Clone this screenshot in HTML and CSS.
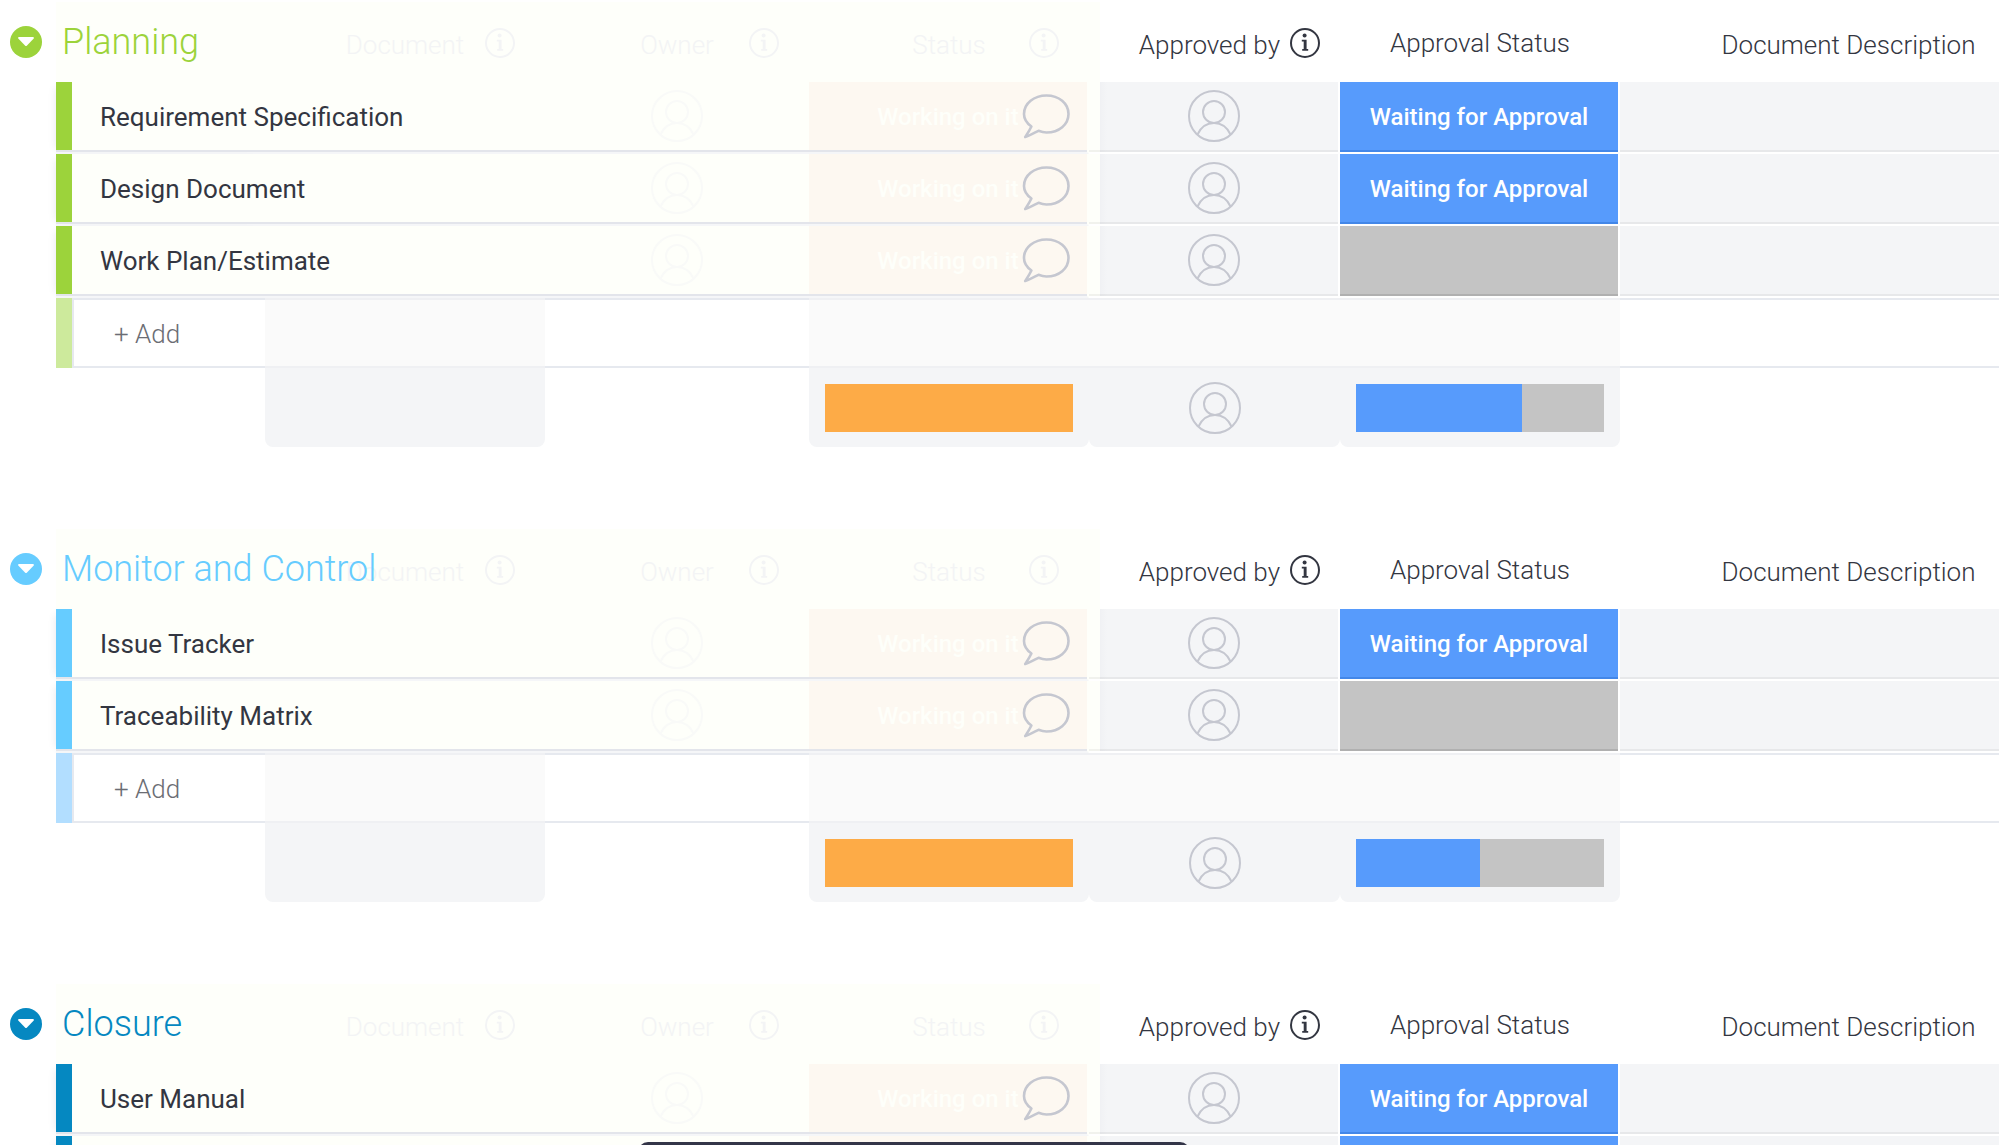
FILE: index.html
```html
<!DOCTYPE html>
<html lang="en">
<head>
    <meta charset="UTF-8">
    <meta name="viewport" content="width=device-width, initial-scale=1.0">
    <title>Project Documents</title>
    <link rel="stylesheet" href="styles.css">
</head>
<body>
    <svg class="sprite" aria-hidden="true">
        <symbol id="info" viewBox="0 0 30 30">
            <circle cx="15" cy="15" r="14" fill="none" stroke="currentColor" stroke-width="2"/>
            <circle cx="14.6" cy="7.6" r="2" fill="currentColor"/>
            <path d="M11.800 11.800h4.800v9.200h1.600v1.700h-6v-1.700h1.500v-7.500H11.800z" fill="currentColor"/>
        </symbol>
        <symbol id="person" viewBox="0 0 52 52">
            <g fill="none" stroke="currentColor" stroke-width="2">
                <circle cx="26" cy="26" r="25"/>
                <circle cx="26" cy="22" r="11"/>
                <path d="M9.500 44.500C13 37 19 33 26 33S39 37 42.500 44.500"/>
            </g>
        </symbol>
        <symbol id="bubble" viewBox="0 0 48 48">
            <path d="M9.400 34.500C4.500 31 2 27 2 22C2 11.500 12 3.500 24.500 3.500S46.500 11.500 46.500 22S37 40.500 24.500 40.500C22 40.500 19.500 40 16.500 38.800C12 41 8 43.500 3.200 45C5.500 41.500 7.500 38.500 9.400 34.500Z" fill="none" stroke="currentColor" stroke-width="2.600" stroke-linejoin="round"/>
        </symbol>
        <symbol id="arrow" viewBox="0 0 16 10">
            <path d="M1 0h14q1.500 .5 .5 1.800L9 8.500q-1 1-2 0L.5 1.800Q-.5 .5 1 0z" fill="currentColor"/>
        </symbol>
    </svg>

    <main>
        <table class="group planning">
            <colgroup>
                <col class="col_gutter"><col class="col_name"><col class="col_doc"><col class="col_owner">
                <col class="col_status"><col class="col_by"><col class="col_status"><col class="col_desc">
            </colgroup>
            <thead>
                <tr>
                    <td><button class="toggle" type="button" aria-label="Collapse Planning"><svg><use href="#arrow"/></svg></button></td>
                    <th class="float title"><h2>Planning</h2></th>
                    <th class="float"><div class="head"><span>Document</span><svg class="info"><use href="#info"/></svg></div></th>
                    <th class="float"><div class="head"><span>Owner</span><svg class="info"><use href="#info"/></svg></div></th>
                    <th class="float"><div class="head"><span>Status</span><svg class="info"><use href="#info"/></svg></div></th>
                    <th class="by"><div class="head_by"><span>Approved by</span><svg class="info"><use href="#info"/></svg></div></th>
                    <th class="approval_head">Approval Status</th>
                    <th>Document Description</th>
                </tr>
            </thead>
            <tbody>
                <tr class="row">
                    <td></td>
                    <th class="float name" scope="row"><div class="item"><span class="bar"></span><span>Requirement Specification</span></div></th>
                    <td class="float"></td>
                    <td class="float"><svg class="person"><use href="#person"/></svg></td>
                    <td class="float working">Working on it<button class="chat" type="button" aria-label="Open updates"><svg><use href="#bubble"/></svg></button></td>
                    <td class="cell by"><svg class="person"><use href="#person"/></svg></td>
                    <td class="cell waiting">Waiting for Approval</td>
                    <td class="cell"></td>
                </tr>
                <tr class="row">
                    <td></td>
                    <th class="float name" scope="row"><div class="item"><span class="bar"></span><span>Design Document</span></div></th>
                    <td class="float"></td>
                    <td class="float"><svg class="person"><use href="#person"/></svg></td>
                    <td class="float working">Working on it<button class="chat" type="button" aria-label="Open updates"><svg><use href="#bubble"/></svg></button></td>
                    <td class="cell by"><svg class="person"><use href="#person"/></svg></td>
                    <td class="cell waiting">Waiting for Approval</td>
                    <td class="cell"></td>
                </tr>
                <tr class="row">
                    <td></td>
                    <th class="float name" scope="row"><div class="item"><span class="bar"></span><span>Work Plan/Estimate</span></div></th>
                    <td class="float"></td>
                    <td class="float"><svg class="person"><use href="#person"/></svg></td>
                    <td class="float working">Working on it<button class="chat" type="button" aria-label="Open updates"><svg><use href="#bubble"/></svg></button></td>
                    <td class="cell by"><svg class="person"><use href="#person"/></svg></td>
                    <td class="cell empty"></td>
                    <td class="cell"></td>
                </tr>
            </tbody>
            <tfoot>
                <tr class="add">
                    <td></td>
                    <td><div class="item"><span class="bar"></span><input class="add_input" type="text" placeholder="+ Add" aria-label="Add to Planning"></div></td>
                    <td class="tint"></td>
                    <td></td>
                    <td class="tint"></td>
                    <td class="tint"></td>
                    <td class="tint"></td>
                    <td></td>
                </tr>
                <tr class="summary">
                    <td></td>
                    <td></td>
                    <td><div class="box"></div></td>
                    <td></td>
                    <td><div class="box"><div class="battery"><span class="orange" style="width: 100%"></span></div></div></td>
                    <td><div class="box"><svg class="person"><use href="#person"/></svg></div></td>
                    <td><div class="box"><div class="battery"><span class="blue" style="width: 67%"></span><span class="grey" style="width: 33%"></span></div></div></td>
                    <td></td>
                </tr>
            </tfoot>
        </table>

        <table class="group monitor">
            <colgroup>
                <col class="col_gutter"><col class="col_name"><col class="col_doc"><col class="col_owner">
                <col class="col_status"><col class="col_by"><col class="col_status"><col class="col_desc">
            </colgroup>
            <thead>
                <tr>
                    <td><button class="toggle" type="button" aria-label="Collapse Monitor and Control"><svg><use href="#arrow"/></svg></button></td>
                    <th class="float title"><h2>Monitor and Control</h2></th>
                    <th class="float"><div class="head"><span>Document</span><svg class="info"><use href="#info"/></svg></div></th>
                    <th class="float"><div class="head"><span>Owner</span><svg class="info"><use href="#info"/></svg></div></th>
                    <th class="float"><div class="head"><span>Status</span><svg class="info"><use href="#info"/></svg></div></th>
                    <th class="by"><div class="head_by"><span>Approved by</span><svg class="info"><use href="#info"/></svg></div></th>
                    <th class="approval_head">Approval Status</th>
                    <th>Document Description</th>
                </tr>
            </thead>
            <tbody>
                <tr class="row">
                    <td></td>
                    <th class="float name" scope="row"><div class="item"><span class="bar"></span><span>Issue Tracker</span></div></th>
                    <td class="float"></td>
                    <td class="float"><svg class="person"><use href="#person"/></svg></td>
                    <td class="float working">Working on it<button class="chat" type="button" aria-label="Open updates"><svg><use href="#bubble"/></svg></button></td>
                    <td class="cell by"><svg class="person"><use href="#person"/></svg></td>
                    <td class="cell waiting">Waiting for Approval</td>
                    <td class="cell"></td>
                </tr>
                <tr class="row">
                    <td></td>
                    <th class="float name" scope="row"><div class="item"><span class="bar"></span><span>Traceability Matrix</span></div></th>
                    <td class="float"></td>
                    <td class="float"><svg class="person"><use href="#person"/></svg></td>
                    <td class="float working">Working on it<button class="chat" type="button" aria-label="Open updates"><svg><use href="#bubble"/></svg></button></td>
                    <td class="cell by"><svg class="person"><use href="#person"/></svg></td>
                    <td class="cell empty"></td>
                    <td class="cell"></td>
                </tr>
            </tbody>
            <tfoot>
                <tr class="add">
                    <td></td>
                    <td><div class="item"><span class="bar"></span><input class="add_input" type="text" placeholder="+ Add" aria-label="Add to Monitor and Control"></div></td>
                    <td class="tint"></td>
                    <td></td>
                    <td class="tint"></td>
                    <td class="tint"></td>
                    <td class="tint"></td>
                    <td></td>
                </tr>
                <tr class="summary">
                    <td></td>
                    <td></td>
                    <td><div class="box"></div></td>
                    <td></td>
                    <td><div class="box"><div class="battery"><span class="orange" style="width: 100%"></span></div></div></td>
                    <td><div class="box"><svg class="person"><use href="#person"/></svg></div></td>
                    <td><div class="box"><div class="battery"><span class="blue" style="width: 50%"></span><span class="grey" style="width: 50%"></span></div></div></td>
                    <td></td>
                </tr>
            </tfoot>
        </table>

        <table class="group closure">
            <colgroup>
                <col class="col_gutter"><col class="col_name"><col class="col_doc"><col class="col_owner">
                <col class="col_status"><col class="col_by"><col class="col_status"><col class="col_desc">
            </colgroup>
            <thead>
                <tr>
                    <td><button class="toggle" type="button" aria-label="Collapse Closure"><svg><use href="#arrow"/></svg></button></td>
                    <th class="float title"><h2>Closure</h2></th>
                    <th class="float"><div class="head"><span>Document</span><svg class="info"><use href="#info"/></svg></div></th>
                    <th class="float"><div class="head"><span>Owner</span><svg class="info"><use href="#info"/></svg></div></th>
                    <th class="float"><div class="head"><span>Status</span><svg class="info"><use href="#info"/></svg></div></th>
                    <th class="by"><div class="head_by"><span>Approved by</span><svg class="info"><use href="#info"/></svg></div></th>
                    <th class="approval_head">Approval Status</th>
                    <th>Document Description</th>
                </tr>
            </thead>
            <tbody>
                <tr class="row">
                    <td></td>
                    <th class="float name" scope="row"><div class="item"><span class="bar"></span><span>User Manual</span></div></th>
                    <td class="float"></td>
                    <td class="float"><svg class="person"><use href="#person"/></svg></td>
                    <td class="float working">Working on it<button class="chat" type="button" aria-label="Open updates"><svg><use href="#bubble"/></svg></button></td>
                    <td class="cell by"><svg class="person"><use href="#person"/></svg></td>
                    <td class="cell waiting">Waiting for Approval</td>
                    <td class="cell"></td>
                </tr>
                <tr class="row">
                    <td></td>
                    <th class="float name" scope="row"><div class="item"><span class="bar"></span></div></th>
                    <td class="float"></td>
                    <td class="float"></td>
                    <td class="float working"></td>
                    <td class="cell by"></td>
                    <td class="cell waiting"></td>
                    <td class="cell"></td>
                </tr>
            </tbody>
        </table>
    </main>
    <div class="toolbar"></div>
</body>
</html>
```

FILE: styles.css
```css
* {
    box-sizing: border-box;
}
body {
    margin: 0;
    padding-top: 2px;
    height: 100vh;
    overflow: hidden;
    background-color: #fff;
    color: #333641;
    font-family: Roboto, sans-serif;
    font-size: 26px;
    font-weight: 300;
}
.sprite {
    position: absolute;
    width: 0;
    height: 0;
}
.planning {
    --color: #9cd33b;
    --light: #cdea9c;
}
.monitor {
    --color: #66ccff;
    --light: #b2deff;
}
.closure {
    --color: #0588c1;
    --light: #82c3e0;
}

/* group table */
.group {
    width: 100%;
    min-width: 2077px;
    margin-bottom: 82px;
    table-layout: fixed;
    border-collapse: separate;
    border-spacing: 0;
}
.col_gutter {
    width: 56px;
}
.col_name {
    width: 209px;
}
.col_doc {
    width: 280px;
}
.col_owner {
    width: 264px;
}
.col_status {
    width: 280px;
}
.col_by {
    width: 251px;
}
td, th {
    padding: 0;
    font-weight: inherit;
    text-align: center;
    white-space: nowrap;
}
svg {
    display: block;
}

/* header */
thead tr {
    height: 80px;
}
thead .float {
    background-color: #fefffa;
    color: #f3f4f5;
}
thead .by {
    background: linear-gradient(to right, #fefffa 11px, #fff 11px);
}
thead .title {
    position: relative;
    z-index: 1;
    padding-left: 6px;
    text-align: left;
}
thead th {
    padding-top: 6px;
}
thead .approval_head {
    padding-top: 2px;
}
h2 {
    margin: 0;
    color: var(--color);
    font-size: 36px;
    font-weight: 300;
    line-height: 40px;
    padding-bottom: 6px;
}
.toggle {
    display: flex;
    align-items: center;
    justify-content: center;
    width: 32px;
    height: 32px;
    margin-left: 10px;
    padding: 0;
    border: none;
    border-radius: 50%;
    background-color: var(--color);
    color: #fff;
}
.toggle svg {
    width: 16px;
    height: 10px;
}
.info {
    width: 30px;
    height: 30px;
    margin-bottom: 4px;
}
.head {
    display: grid;
    grid-template-columns: 30px 1fr 30px;
    align-items: center;
    padding: 0 30px;
}
.head span {
    grid-column: 2;
}
.head_by {
    display: flex;
    align-items: center;
    justify-content: flex-end;
    gap: 10px;
    padding-right: 20px;
}

/* rows */
.row {
    height: 72px;
}
.row .float {
    border-bottom: 2px solid #f5f6f8;
    background-color: #fefffa;
    box-shadow: inset 0 -2px #e3e5eb;
    color: #f9faf8;
}
.row .name {
    box-shadow: inset 0 -2px #e3e5eb, -6px 0 8px -6px rgba(50, 50, 93, 0.12);
}
.item {
    display: flex;
    align-items: center;
    height: 70px;
    color: #333641;
    font-weight: 400;
    gap: 28px;
}
.bar {
    flex: none;
    width: 16px;
    height: 68px;
    margin-bottom: 2px;
    background-color: var(--color);
}
.person {
    width: 52px;
    height: 52px;
    margin: 0 auto;
}
.row .person {
    margin-bottom: 2px;
}
.row .working {
    position: relative;
    border-right: 2px solid #fefffa;
    background-color: #fdf8f1;
    color: #fefffa;
    font-size: 24px;
    font-weight: 500;
}
.chat {
    position: absolute;
    top: 10px;
    right: 17px;
    padding: 0;
    border: none;
    background: none;
    color: #c5c7d0;
}
.chat svg {
    width: 48px;
    height: 48px;
}
.cell {
    border-right: 2px solid #fff;
    border-bottom: 2px solid #fff;
    background-color: #f4f5f7;
    box-shadow: inset 0 -2px rgba(0, 0, 0, 0.05);
    color: #c5c7d0;
}
.cell.by {
    background: linear-gradient(to right, #fefffa 11px, #f0f1f4 11px, #f4f5f7 18px);
}
.waiting {
    background-color: #579bfc;
    box-shadow: inset 0 -2px #4387e8;
    color: #fff;
    font-size: 24px;
    font-weight: 500;
}
.empty {
    background-color: #c4c4c4;
    box-shadow: inset 0 -2px #b0b0b0;
}

/* add line */
.add {
    height: 70px;
}
.add td + td {
    border-top: 2px solid #e6e9ef;
    border-bottom: 2px solid #e6e9ef;
}
.add td:nth-child(2) {
    border: none;
}
.add .tint {
    border-color: #eff0f3;
    background-color: #fafafa;
}
.add .item {
    gap: 0;
}
.add .bar {
    height: 70px;
    margin: 0;
    background-color: var(--light);
}
.add_input {
    flex: 1;
    min-width: 0;
    height: 70px;
    padding: 2px 0 0 40px;
    border: 2px solid #e6e9ef;
    border-right: none;
    background: none;
    font: inherit;
    font-weight: 300;
}
.add_input::placeholder {
    color: #6b6d74;
    opacity: 1;
}

/* column summary */
.summary {
    height: 79px;
}
.box {
    display: flex;
    align-items: center;
    height: 79px;
    padding: 0 16px;
    border-radius: 0 0 8px 8px;
    background-color: #f4f5f7;
    color: #c5c7d0;
}
.battery {
    display: flex;
    width: 100%;
    height: 48px;
}
.orange {
    background-color: #fdab47;
}
.blue {
    background-color: #579bfc;
}
.grey {
    background-color: #c4c4c4;
}

.toolbar {
    position: fixed;
    bottom: -57px;
    left: 638px;
    width: 552px;
    height: 60px;
    border-radius: 10px;
    background-color: #333548;
}
```
